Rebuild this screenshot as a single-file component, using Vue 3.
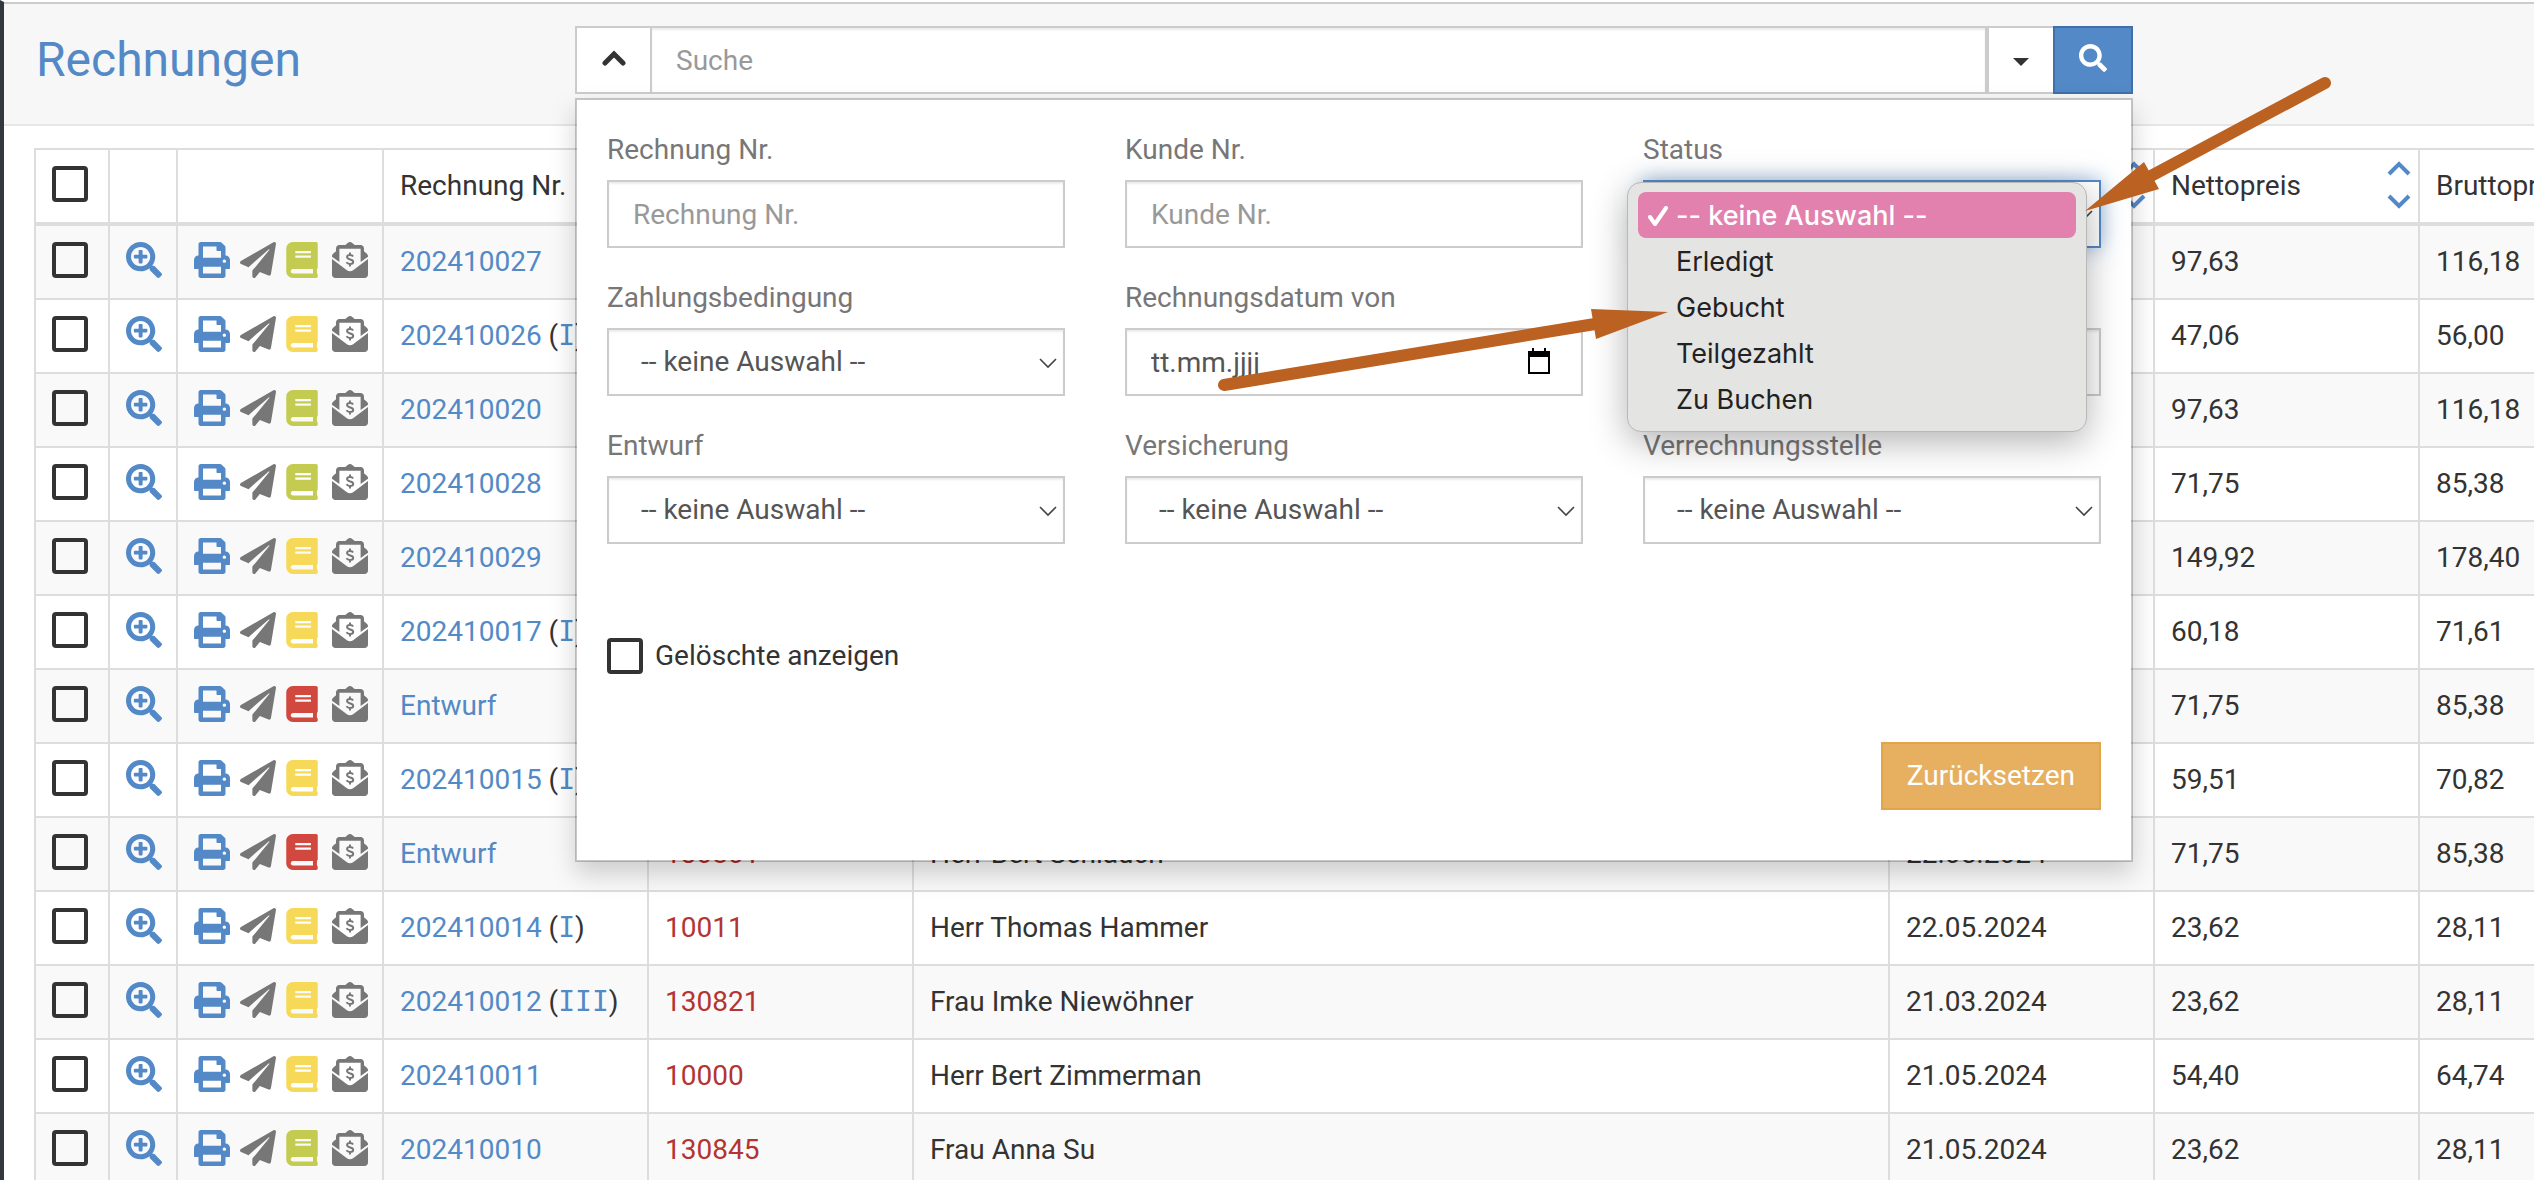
<script setup>
import { ref } from 'vue'

const rows = [
  { nr: '202410027', book: 'green', netto: '97,63', brutto: '116,18' },
  { nr: '202410026', level: 'I', book: 'yellow', netto: '47,06', brutto: '56,00' },
  { nr: '202410020', book: 'green', netto: '97,63', brutto: '116,18' },
  { nr: '202410028', book: 'green', netto: '71,75', brutto: '85,38' },
  { nr: '202410029', book: 'yellow', netto: '149,92', brutto: '178,40' },
  { nr: '202410017', level: 'I', book: 'yellow', netto: '60,18', brutto: '71,61' },
  { nr: 'Entwurf', book: 'red', netto: '71,75', brutto: '85,38' },
  { nr: '202410015', level: 'I', book: 'yellow', netto: '59,51', brutto: '70,82' },
  { nr: 'Entwurf', book: 'red', kunde: '130801', name: 'Herr Bert Schlauch', datum: '22.05.2024', netto: '71,75', brutto: '85,38' },
  { nr: '202410014', level: 'I', book: 'yellow', kunde: '10011', name: 'Herr Thomas Hammer', datum: '22.05.2024', netto: '23,62', brutto: '28,11' },
  { nr: '202410012', level: 'III', book: 'yellow', kunde: '130821', name: 'Frau Imke Niewöhner', datum: '21.03.2024', netto: '23,62', brutto: '28,11' },
  { nr: '202410011', book: 'yellow', kunde: '10000', name: 'Herr Bert Zimmerman', datum: '21.05.2024', netto: '54,40', brutto: '64,74' },
  { nr: '202410010', book: 'green', kunde: '130845', name: 'Frau Anna Su', datum: '21.05.2024', netto: '23,62', brutto: '28,11' }
]

const none = '-- keine Auswahl --'
const options = [none, 'Erledigt', 'Gebucht', 'Teilgezahlt', 'Zu Buchen']
const status = ref(none)

const fields = [
  { id: 'rechnung', label: 'Rechnung Nr.', type: 'text' },
  { id: 'kunde', label: 'Kunde Nr.', type: 'text' },
  { id: 'status', label: 'Status', type: 'status' },
  { id: 'zahlung', label: 'Zahlungsbedingung', type: 'select' },
  { id: 'von', label: 'Rechnungsdatum von', type: 'date' },
  { id: 'bis', label: '', type: 'date' },
  { id: 'entwurf', label: 'Entwurf', type: 'select' },
  { id: 'versicherung', label: 'Versicherung', type: 'select' },
  { id: 'stelle', label: 'Verrechnungsstelle', type: 'select' }
]
</script>

<template>
  <div class="page">
    <svg class="defs" aria-hidden="true">
      <symbol id="i-zoom" viewBox="0 0 512 512"><path d="M304 192v32c0 6.600-5.400 12-12 12h-56v56c0 6.600-5.400 12-12 12h-32c-6.600 0-12-5.400-12-12v-56h-56c-6.600 0-12-5.400-12-12v-32c0-6.600 5.400-12 12-12h56v-56c0-6.600 5.400-12 12-12h32c6.600 0 12 5.400 12 12v56h56c6.600 0 12 5.400 12 12zm201 284.700L476.700 505c-9.400 9.400-24.600 9.400-33.900 0L343 405.300c-4.500-4.500-7-10.600-7-17V372c-35.300 27.600-79.700 44-128 44C93.100 416 0 322.900 0 208S93.100 0 208 0s208 93.100 208 208c0 48.300-16.400 92.700-44 128h16.300c6.400 0 12.500 2.500 17 7l99.700 99.700c9.300 9.400 9.300 24.600 0 34zM344 208c0-75.200-60.800-136-136-136S72 132.800 72 208s60.800 136 136 136 136-60.800 136-136z" /></symbol>
      <symbol id="i-search" viewBox="0 0 512 512"><path d="M505 442.700L405.300 343c-4.500-4.500-10.600-7-17-7H372c27.600-35.300 44-79.700 44-128C416 93.100 322.900 0 208 0S0 93.100 0 208s93.100 208 208 208c48.300 0 92.700-16.400 128-44v16.300c0 6.400 2.500 12.500 7 17l99.700 99.700c9.400 9.400 24.600 9.400 33.900 0l28.300-28.300c9.400-9.400 9.400-24.600.1-34zM208 336c-70.700 0-128-57.200-128-128 0-70.700 57.200-128 128-128 70.700 0 128 57.200 128 128 0 70.700-57.200 128-128 128z" /></symbol>
      <symbol id="i-print" viewBox="0 0 512 512"><path d="M448 192V77.250c0-8.490-3.370-16.620-9.370-22.630L393.370 9.370c-6-6-14.140-9.370-22.630-9.370H96C78.330 0 64 14.330 64 32v160c-35.350 0-64 28.650-64 64v112c0 8.840 7.160 16 16 16h48v96c0 17.670 14.330 32 32 32h320c17.670 0 32-14.330 32-32v-96h48c8.840 0 16-7.160 16-16V256c0-35.350-28.650-64-64-64zm-64 256H128v-96h256v96zm0-224H128V64h192v48c0 8.840 7.160 16 16 16h48v96zm48 72c-13.250 0-24-10.750-24-24 0-13.260 10.750-24 24-24s24 10.740 24 24c0 13.250-10.750 24-24 24z" /></symbol>
      <symbol id="i-plane" viewBox="0 0 512 512"><path d="M476 3.200L12.500 270.600c-18.100 10.400-15.800 35.600 2.200 43.200L121 358.400l287.300-253.200c5.500-4.900 13.300 2.600 8.600 8.300L176 407v80.500c0 23.600 28.500 32.900 42.500 15.800L282 426l124.600 52.200c14.200 6 30.400-2.900 33-18.200l72-432C515 7.800 493.300-6.800 476 3.200z" /></symbol>
      <symbol id="i-book" viewBox="0 0 448 512"><path d="M448 360V24c0-13.300-10.700-24-24-24H96C43 0 0 43 0 96v320c0 53 43 96 96 96h328c13.300 0 24-10.700 24-24v-16c0-7.500-3.500-14.300-8.900-18.700-4.200-15.400-4.200-59.300 0-74.700 5.400-4.300 8.900-11.100 8.900-18.600zM128 134c0-3.300 2.700-6 6-6h212c3.300 0 6 2.700 6 6v20c0 3.300-2.700 6-6 6H134c-3.300 0-6-2.700-6-6v-20zm0 64c0-3.300 2.700-6 6-6h212c3.300 0 6 2.700 6 6v20c0 3.300-2.700 6-6 6H134c-3.300 0-6-2.700-6-6v-20zm253.400 250H96c-17.700 0-32-14.300-32-32 0-17.600 14.400-32 32-32h285.400c-1.900 17.100-1.900 46.900 0 64z" /></symbol>
      <symbol id="i-mail" viewBox="0 0 512 512">
        <path d="M256 0c-22 0-44 28-66 43h-85c-26 0-48 22-48 48v42l-37 32C8 175 0 188 0 200v8l105 75V95h302v188l105-75v-8c0-12-8-25-20-35l-37-32V91c0-26-22-48-48-48h-85C300 28 278 0 256 0z" />
        <path d="M0 240v224c0 26 22 48 48 48h416c26 0 48-22 48-48V240L300 400c-26 22-62 22-88 0L0 240z" />
        <path d="M300 205c-8-14-24-20-44-20-26 0-42 12-42 30 0 44 88 24 88 66 0 20-18 32-46 32-24 0-40-8-50-24M256 150v35M256 313v35" fill="none" stroke="currentColor" stroke-width="28" />
      </symbol>
      <symbol id="i-sort" viewBox="0 0 24 50"><path d="M2 14 12 4 22 14M2 36 12 46 22 36" fill="none" stroke="currentColor" stroke-width="4" /></symbol>
      <symbol id="i-calendar" viewBox="0 0 22 26"><path d="M0 3h4V0h2v3h10V0h2v3h4v23H0zM2 9v15h18V9z" fill-rule="evenodd" /></symbol>
    </svg>

    <header class="topbar">
      <h1>Rechnungen</h1>
      <div class="search">
        <div class="search-group">
          <button type="button" class="toggle" aria-label="Filter schließen">
            <svg width="24" height="16" viewBox="0 0 24 16"><path d="M3 13 12 4l9 9" fill="none" stroke="currentColor" stroke-width="5" stroke-linecap="round" /></svg>
          </button>
          <input type="text" class="control query" placeholder="Suche" aria-label="Suche" />
          <button type="button" class="more" aria-label="Suchoptionen"><span class="caret"></span></button>
          <button type="button" class="go" aria-label="Suchen"><svg width="28" height="28"><use href="#i-search" /></svg></button>
        </div>

        <form class="panel" @submit.prevent>
          <div class="fields">
            <div v-for="f in fields" :key="f.id" class="field">
              <label :for="f.id">{{ f.label }}</label>
              <input v-if="f.type === 'text'" :id="f.id" type="text" class="control" :placeholder="f.label" />
              <div v-else-if="f.type === 'date'" class="date">
                <input :id="f.id" type="text" class="control" value="tt.mm.jjjj" :aria-label="f.label || 'Rechnungsdatum bis'" />
                <svg class="date-icon" width="22" height="26"><use href="#i-calendar" /></svg>
              </div>
              <div v-else class="pick">
                <select :id="f.id" class="control" :class="{ active: f.type === 'status' }">
                  <option>{{ none }}</option>
                </select>
                <svg class="pick-icon" width="18" height="12" viewBox="0 0 18 12"><path d="M1 2l8 8 8-8" fill="none" stroke="currentColor" stroke-width="1.6" /></svg>
              </div>

              <template v-if="f.type === 'status'">
                <ul class="menu" role="listbox" aria-label="Status">
                  <li v-for="o in options" :key="o" role="option" :aria-selected="o === status" :class="{ chosen: o === status }" @click="status = o">
                    <span class="tick"><svg v-if="o === status" width="20" height="20" viewBox="0 0 20 20"><path d="M2 11l5 7L18 2" fill="none" stroke="currentColor" stroke-width="4" stroke-linecap="round" stroke-linejoin="round" /></svg></span>{{ o }}
                  </li>
                </ul>
                <svg class="arrows" width="10" height="10" aria-hidden="true">
                  <path d="M-419 255 -48 194M682-47 506 47" stroke="currentColor" stroke-width="12" stroke-linecap="round" />
                  <path d="M-52 179 25 182-47 209zM501 32 442 81 516 59z" fill="currentColor" />
                </svg>
              </template>
            </div>
          </div>
          <label class="deleted"><input type="checkbox" class="box" />Gelöschte anzeigen</label>
          <div class="actions"><button type="reset" class="reset">Zurücksetzen</button></div>
        </form>
      </div>
    </header>

    <main class="list">
      <table>
        <colgroup>
          <col class="c-check" /><col class="c-zoom" /><col class="c-tools" /><col class="c-data" /><col class="c-data" /><col /><col class="c-data" /><col class="c-data" /><col class="c-data" />
        </colgroup>
        <thead>
          <tr>
            <th><input type="checkbox" class="box" aria-label="Alle auswählen" /></th>
            <th></th>
            <th></th>
            <th>Rechnung Nr.</th>
            <th></th>
            <th></th>
            <th><div class="head"><span></span><svg class="sort" width="24" height="50"><use href="#i-sort" /></svg></div></th>
            <th><div class="head">Nettopreis<svg class="sort" width="24" height="50"><use href="#i-sort" /></svg></div></th>
            <th><div class="head">Bruttopreis<svg class="sort" width="24" height="50"><use href="#i-sort" /></svg></div></th>
          </tr>
        </thead>
        <tbody>
          <tr v-for="(r, i) in rows" :key="i">
            <td><input type="checkbox" class="box" :aria-label="'Auswählen ' + r.nr" /></td>
            <td><a href="#" class="ico" aria-label="Ansehen"><svg width="36" height="36"><use href="#i-zoom" /></svg></a></td>
            <td>
              <div class="tools">
                <a href="#" class="ico" aria-label="Drucken"><svg width="36" height="36"><use href="#i-print" /></svg></a>
                <a href="#" class="ico grey" aria-label="Senden"><svg width="36" height="36"><use href="#i-plane" /></svg></a>
                <a href="#" class="ico" :class="r.book" aria-label="Buchen"><svg width="32" height="36"><use href="#i-book" /></svg></a>
                <a href="#" class="ico grey mail" aria-label="Zahlung"><svg width="36" height="36"><use href="#i-mail" /></svg></a>
              </div>
            </td>
            <td><a href="#">{{ r.nr }}</a><template v-if="r.level"> (<a href="#" class="level">{{ r.level }}</a>)</template></td>
            <td><a href="#" class="customer">{{ r.kunde }}</a></td>
            <td>{{ r.name }}</td>
            <td>{{ r.datum }}</td>
            <td>{{ r.netto }}</td>
            <td>{{ r.brutto }}</td>
          </tr>
        </tbody>
      </table>
    </main>
  </div>
</template>

<style>
body {
  margin: 0;
  background: #fff;
}
</style>

<style scoped>
* {
  box-sizing: border-box;
}
.page {
  height: 100vh;
  overflow: hidden;
  border-left: 4px solid #32383e;
  border-top: 2px solid #fff;
  font: 28px/40px Roboto, 'Liberation Sans', sans-serif;
  color: #333;
}
.defs {
  position: absolute;
  width: 0;
  height: 0;
}
svg {
  display: block;
  fill: currentColor;
}
a {
  color: #5389c6;
  text-decoration: none;
}
button,
input,
select {
  font: inherit;
  margin: 0;
  border-radius: 0;
}

.topbar {
  display: grid;
  grid-template-columns: 571fr 1558fr 401fr;
  align-items: start;
  height: 124px;
  background: #f7f7f7;
  border-top: 2px solid #ccc;
  border-bottom: 2px solid #e6e6e6;
  padding-top: 22px;
}
h1 {
  margin: 0;
  padding-left: 32px;
  font-size: 48px;
  line-height: 68px;
  font-weight: 400;
  color: #5389c6;
}
.search {
  position: relative;
  z-index: 2;
}
.search-group {
  display: flex;
  height: 68px;
}
.toggle,
.more {
  display: flex;
  align-items: center;
  justify-content: center;
  padding: 0;
  background: #fff;
  border: 2px solid #ccc;
  color: #333;
}
.toggle {
  width: 75px;
  border-right: 0;
  padding-bottom: 4px;
}
.more {
  width: 66px;
  border-right: 0;
}
.caret {
  border: 8px solid transparent;
  border-top-color: #333;
  border-bottom: 0;
  margin-top: 4px;
}
.go {
  width: 80px;
  display: flex;
  align-items: center;
  justify-content: center;
  padding: 0 0 4px;
  background: #5389c6;
  border: 2px solid #3f70a9;
  color: #fff;
}
.control {
  display: block;
  width: 100%;
  height: 68px;
  padding: 0 24px;
  border: 2px solid #ccc;
  background: #fff;
  color: #555;
  box-shadow: inset 0 2px 2px rgba(0, 0, 0, 0.075);
  outline: 0;
}
.control::placeholder {
  color: #999;
  opacity: 1;
}
.query {
  flex: 1;
  width: auto;
  min-width: 0;
}

.panel {
  position: absolute;
  top: 72px;
  left: 0;
  right: 0;
  padding: 30px 30px 50px;
  background: #fff;
  background-clip: padding-box;
  border: 2px solid rgba(0, 0, 0, 0.2);
  box-shadow: 0 12px 24px rgba(0, 0, 0, 0.175);
}
.fields {
  display: grid;
  grid-template-columns: repeat(3, 1fr);
  gap: 30px 60px;
}
.field {
  position: relative;
}
.field > label {
  display: block;
  height: 40px;
  margin-bottom: 10px;
  color: #777;
}
.field:nth-child(3) {
  z-index: 3;
}
.pick,
.date {
  position: relative;
}
select.control {
  appearance: none;
  padding-left: 32px;
}
.control.active {
  border-color: #5389c6;
  box-shadow: 0 0 20px rgba(83, 137, 198, 0.6);
}
.pick-icon {
  position: absolute;
  right: 8px;
  top: 29px;
  color: #444;
}
.date-icon {
  position: absolute;
  right: 33px;
  top: 20px;
  color: #000;
}
.menu {
  position: absolute;
  top: 52px;
  left: -16px;
  right: 14px;
  margin: 0;
  padding: 9px 10px;
  list-style: none;
  background: #e4e4e2;
  border: 1px solid #b8b8b8;
  border-radius: 14px;
  box-shadow: 0 10px 36px rgba(0, 0, 0, 0.3);
  font-family: Inter, 'Liberation Sans', sans-serif;
  font-size: 27px;
  line-height: 44px;
  color: #222;
}
.menu li {
  display: flex;
  align-items: center;
  padding: 2px 0 0 10px;
  border-radius: 8px;
}
.menu .chosen {
  background: #e381ae;
  color: #fff;
  font-weight: 500;
}
.tick {
  width: 28px;
}
.arrows {
  position: absolute;
  top: 0;
  left: 0;
  overflow: visible;
  color: #bb6121;
  pointer-events: none;
}
.deleted {
  display: flex;
  align-items: center;
  gap: 12px;
  margin-top: 92px;
}
.box {
  appearance: none;
  display: block;
  width: 36px;
  height: 36px;
  border: 4px solid #333;
  border-radius: 4px;
}
.actions {
  display: flex;
  justify-content: flex-end;
  margin-top: 66px;
}
.reset {
  height: 68px;
  padding: 0 24px;
  background: #e6b060;
  border: 2px solid #e3a54a;
  color: #fff;
}

.list {
  padding: 22px 0 0 30px;
}
/* The last column runs past the right edge of the window. */
table {
  width: calc(100% + 151px);
  table-layout: fixed;
  border-collapse: separate;
  border-spacing: 0;
  border: solid #ddd;
  border-width: 2px 0 0 2px;
}
.c-check {
  width: 74px;
}
.c-zoom {
  width: 68px;
}
.c-tools {
  width: 206px;
}
.c-data {
  width: 265px;
}
th,
td {
  height: 74px;
  padding: 16px 0 16px 16px;
  border: solid #ddd;
  border-width: 0 2px 2px 0;
  text-align: left;
  vertical-align: top;
  font-weight: 400;
  line-height: 40px;
  white-space: nowrap;
}
th {
  height: 76px;
  border-bottom-width: 4px;
}
tbody tr:nth-child(odd) {
  background: #f9f9f9;
}
.head {
  display: flex;
  justify-content: space-between;
  height: 40px;
  padding-right: 7px;
}
.sort {
  color: #5389c6;
  margin-top: -6px;
}
.tools {
  display: flex;
  gap: 10px;
}
.ico.grey {
  color: #777;
}
.ico.green {
  color: #c3cb50;
}
.ico.yellow {
  color: #f7d95a;
}
.ico.red {
  color: #d1483e;
}
.mail {
  margin-left: 4px;
}
.level {
  font-family: 'DejaVu Sans Mono', monospace;
}
.customer {
  color: #b33432;
}
</style>
